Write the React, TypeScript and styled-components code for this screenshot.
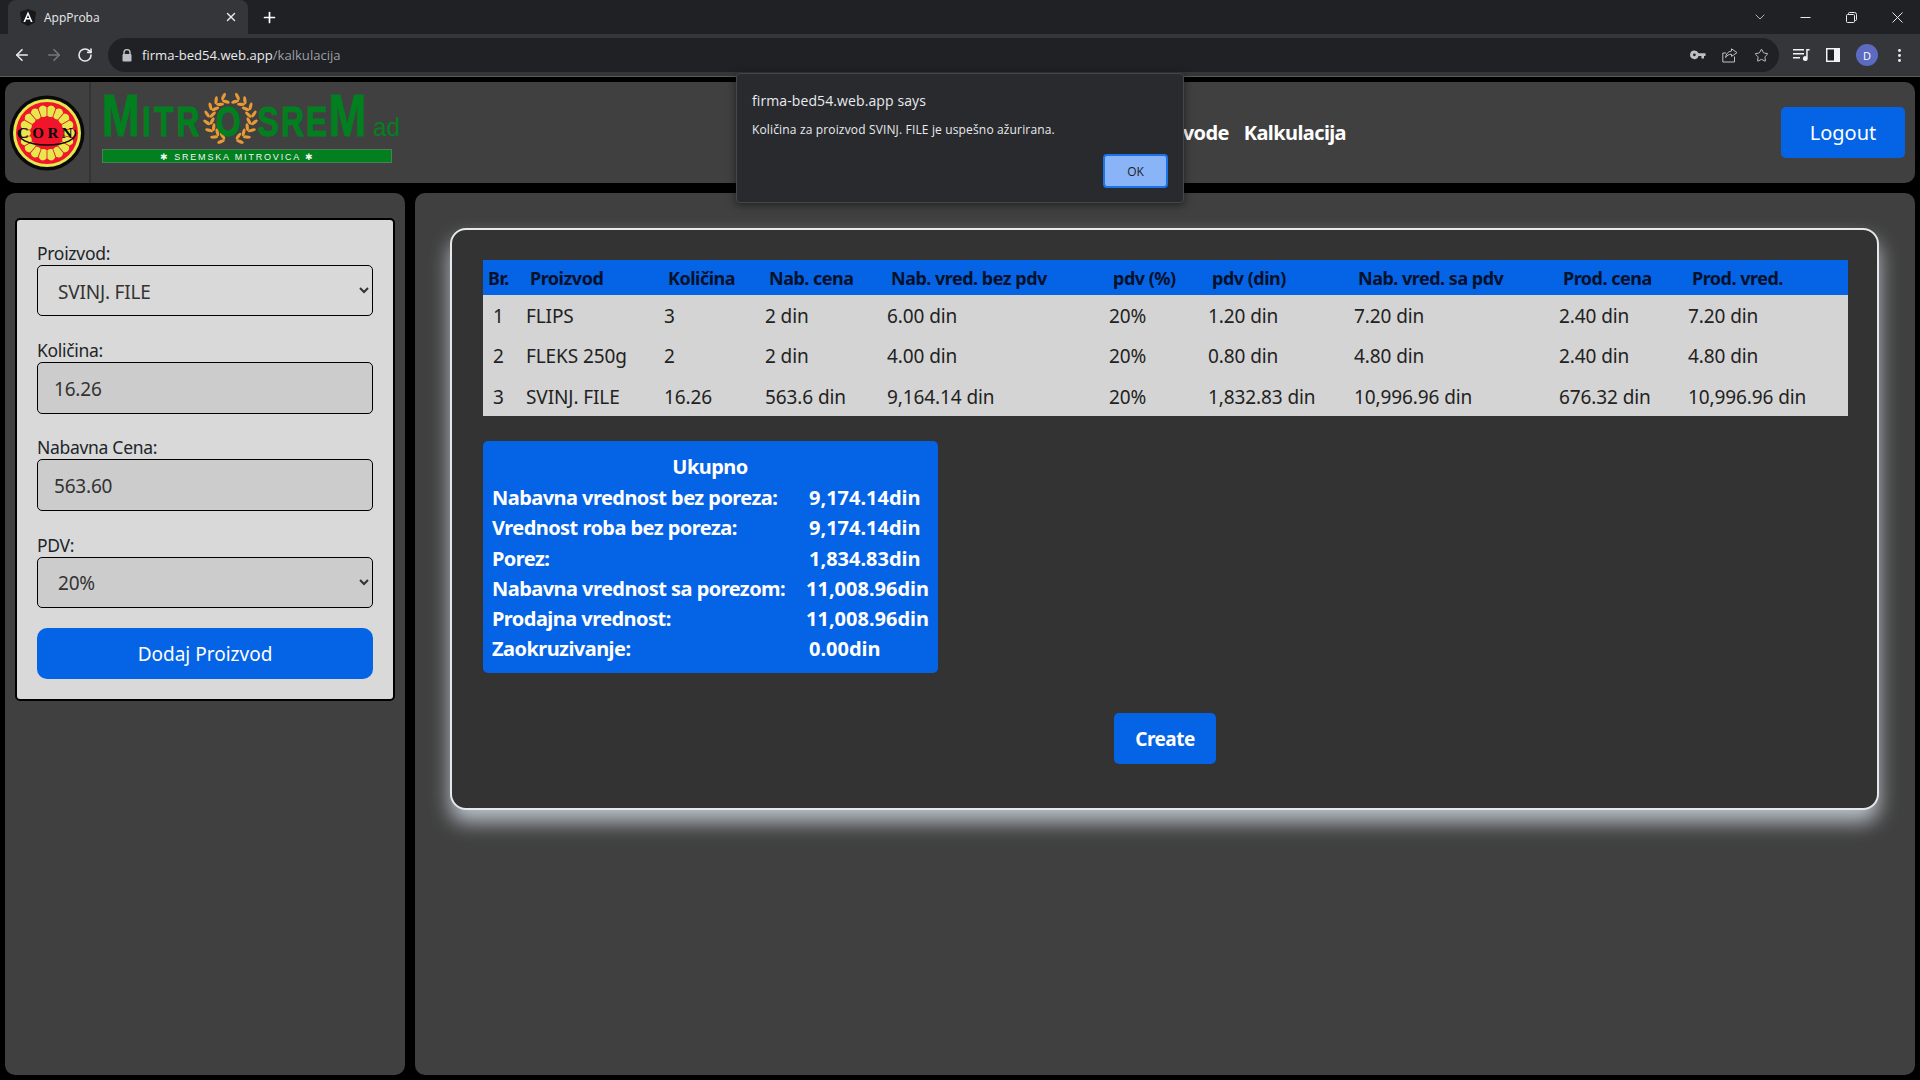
import React from 'react'
import styled, { createGlobalStyle } from 'styled-components'
import { ArrowLeft, ArrowRight, ChevronDown, MoreVertical, Plus, RotateCw, Star, X } from 'lucide-react'

const BLUE = '#0563e6'
const FONT = '"Noto Sans", "Open Sans", sans-serif'

const GlobalStyle = createGlobalStyle`
  html, body { margin: 0; padding: 0; background: #000; overflow: hidden; }
  body { font-family: ${FONT}; }
  * { box-sizing: border-box; }
`

const COLUMNS = [39, 138, 101, 122, 222, 99, 146, 205, 129, 164]
const HEADERS = ['Br.', 'Proizvod', 'Količina', 'Nab. cena', 'Nab. vred. bez pdv', 'pdv (%)', 'pdv (din)', 'Nab. vred. sa pdv', 'Prod. cena', 'Prod. vred.']
const ROWS = [
  ['1', 'FLIPS', '3', '2 din', '6.00 din', '20%', '1.20 din', '7.20 din', '2.40 din', '7.20 din'],
  ['2', 'FLEKS 250g', '2', '2 din', '4.00 din', '20%', '0.80 din', '4.80 din', '2.40 din', '4.80 din'],
  ['3', 'SVINJ. FILE', '16.26', '563.6 din', '9,164.14 din', '20%', '1,832.83 din', '10,996.96 din', '676.32 din', '10,996.96 din']
]
const TOTALS = [
  { label: 'Nabavna vrednost bez poreza:', value: '9,174.14din' },
  { label: 'Vrednost roba bez poreza:', value: '9,174.14din' },
  { label: 'Porez:', value: '1,834.83din' },
  { label: 'Nabavna vrednost sa porezom:', value: '11,008.96din', wide: true },
  { label: 'Prodajna vrednost:', value: '11,008.96din', wide: true },
  { label: 'Zaokruzivanje:', value: '0.00din' }
]

function AngularIcon () {
  return (
    <svg width="16" height="17" viewBox="0 0 16 17">
      <path d="M8 0 L16 2.8 L14.7 13.4 L8 17 L1.3 13.4 L0 2.8 Z" fill="#16181c" />
      <path d="M8 2.4 L12.6 13 H10.8 L9.9 10.6 H6.1 L5.2 13 H3.4 Z M8 6 L6.8 9 H9.2 Z" fill="#fff" fillRule="evenodd" />
    </svg>
  )
}

function LockIcon () {
  return (
    <svg width="10" height="13" viewBox="0 0 10 13">
      <path d="M2 5.5 V3.6 a3 3 0 0 1 6 0 V5.5" fill="none" stroke="#bdc1c6" strokeWidth="1.4" />
      <rect x="0.5" y="5" width="9" height="7.5" rx="1" fill="#bdc1c6" />
    </svg>
  )
}

function KeyIcon () {
  return (
    <svg width="16" height="10" viewBox="0 0 16 10">
      <path d="M4.5 0.5 a4.3 4.3 0 0 1 4 2.7 H15.5 V6 H14 V8.4 H11.4 V6 H8.5 a4.3 4.3 0 1 1 -4 -5.5 Z M4.4 3.4 a1.4 1.4 0 1 0 0 2.8 a1.4 1.4 0 0 0 0 -2.8 Z" fill="#bdc1c6" fillRule="evenodd" />
    </svg>
  )
}

function ShareIcon () {
  return (
    <svg width="16" height="15" viewBox="0 0 16 15" fill="none" stroke="#bdc1c6" strokeWidth="1">
      <path d="M12.5 8.5 V14 H0.8 V5 H4" />
      <path d="M9.5 0.8 L15 4.6 L9.5 8.4 V6.2 C6.8 6.2 5 7.4 3.6 9.6 C4 6 6 3.4 9.5 3 Z" />
    </svg>
  )
}

function MediaIcon () {
  return (
    <svg width="17" height="12" viewBox="0 0 17 12" fill="#f1f3f4">
      <rect x="0" y="0" width="11" height="1.5" />
      <rect x="0" y="4" width="11" height="1.5" />
      <rect x="0" y="8" width="7" height="1.5" />
      <path d="M13.2 0 H16.6 V1.6 H14.7 V9.6 A2.4 2.4 0 1 1 13.2 7.4 Z" />
    </svg>
  )
}

function SidePanelIcon () {
  return (
    <svg width="14" height="14" viewBox="0 0 14 14">
      <rect width="14" height="14" fill="#f1f3f4" />
      <rect x="1.5" y="1.5" width="6.5" height="11" fill="#202124" />
    </svg>
  )
}

function WindowIcon ({ kind }: { kind: 'min' | 'restore' | 'close' }) {
  return (
    <svg width="11" height="11" viewBox="0 0 11 11" fill="none" stroke="#e8eaed" strokeWidth="1">
      {kind === 'min' && <path d="M0.5 5.5 H10.5" />}
      {kind === 'restore' && <path d="M2.5 2.5 V1.5 a1 1 0 0 1 1 -1 H8.5 a2 2 0 0 1 2 2 V7.5 a1 1 0 0 1 -1 1 H8.5 M1.5 2.5 H7.5 a1 1 0 0 1 1 1 V9.5 a1 1 0 0 1 -1 1 H1.5 a1 1 0 0 1 -1 -1 V3.5 a1 1 0 0 1 1 -1 Z" />}
      {kind === 'close' && <path d="M0.5 0.5 L10.5 10.5 M10.5 0.5 L0.5 10.5" />}
    </svg>
  )
}

function CornLogo () {
  const petals = Array.from({ length: 18 }, (_, i) => i * 20 + 10)
  return (
    <svg width="76" height="76" viewBox="0 0 76 76">
      <circle cx="38" cy="38" r="37.5" fill="#0a0a0a" />
      <circle cx="38" cy="38" r="34" fill="#e6e84e" />
      <circle cx="38" cy="38" r="31" fill="#f0152a" />
      {petals.map(angle => (
        <path key={angle} d="M35.4 21 L34 12.5 Q38 8 42 12.5 L40.6 21 Q38 22.5 35.4 21 Z" fill="#e6e84e" transform={`rotate(${angle} 38 38)`} />
      ))}
      <text x="38" y="43" textAnchor="middle" fontFamily="Liberation Serif, serif" fontWeight="700" fontSize="15" letterSpacing="3.6" fill="#0a0a0a">CORN</text>
      <path d="M10 35 C6 44 20 50 38 50 C56 50 70 44 66 35" fill="none" stroke="#0a0a0a" strokeWidth="1.4" />
    </svg>
  )
}

function Laurel () {
  const steps = Array.from({ length: 8 }, (_, i) => 16 + i * 20)
  const pair = (a: number, side: number) => {
    const rad = a * Math.PI / 180
    const x = side * Math.sin(rad) * 21
    const y = Math.cos(rad) * 21
    return (
      <g key={`${side}-${a}`} transform={`translate(${x} ${y}) rotate(${side * (90 - a)})`}>
        <ellipse cx="2.8" cy="-3" rx="4" ry="1.6" fill="#e89a34" transform="rotate(-50 2.8 -3)" />
        <ellipse cx="-2.8" cy="-3" rx="4" ry="1.6" fill="#e89a34" transform="rotate(50 -2.8 -3)" />
      </g>
    )
  }
  return <g transform="translate(129.5 28.5)">{steps.map(a => pair(a, 1))}{steps.map(a => pair(a, -1))}</g>
}

function MitrosremLogo () {
  const green = '#028020'
  return (
    <svg width="300" height="100" viewBox="0 -11 300 100">
      <Laurel />
      <g transform="scale(0.76 1)">
        <text y="45" fontFamily="Liberation Sans, sans-serif" fontWeight="700" fontSize="42" fill={green} stroke={green} strokeWidth="1">
          <tspan x="1" fontSize="60">M</tspan>
          <tspan x="54" letterSpacing="4">ITR</tspan>
          <tspan x="151">O</tspan>
          <tspan x="206" letterSpacing="2.7">SRE</tspan>
          <tspan x="299" fontSize="60">M</tspan>
        </text>
      </g>
      <text x="272" y="45" fontSize="25" textLength="27" lengthAdjust="spacingAndGlyphs" fontFamily="Liberation Sans, sans-serif" fill={green}>ad</text>
      <rect x="1.5" y="58.5" width="289" height="13" fill={green} stroke="#4b7f56" />
      <text x="59" y="68.5" fontSize="9" textLength="153" fontFamily="Liberation Sans, sans-serif" fill="#eef6ee">✱ SREMSKA MITROVICA ✱</text>
    </svg>
  )
}

export default function App () {
  return (
    <Page>
      <GlobalStyle />
      <TabStrip>
        <ActiveTab>
          <AngularIcon />
          <TabTitle>AppProba</TabTitle>
          <X size={14} color="#e8eaed" strokeWidth={2.4} />
        </ActiveTab>
        <NewTab><Plus size={17} color="#fff" strokeWidth={2.4} /></NewTab>
        <WindowControls>
          <ChevronDown size={16} color="#bdc1c6" strokeWidth={1.4} />
          <WindowButton><WindowIcon kind="min" /></WindowButton>
          <WindowButton><WindowIcon kind="restore" /></WindowButton>
          <WindowButton><WindowIcon kind="close" /></WindowButton>
        </WindowControls>
      </TabStrip>
      <Toolbar>
        <NavIcons>
          <ArrowLeft size={18} color="#e8eaed" strokeWidth={2.2} />
          <ArrowRight size={18} color="#74777b" strokeWidth={2.2} />
          <RotateCw size={16} color="#e8eaed" strokeWidth={2.4} />
        </NavIcons>
        <Omnibox>
          <LockIcon />
          <UrlText>firma-bed54.web.app<UrlPath>/kalkulacija</UrlPath></UrlText>
          <OmniIcons>
            <KeyIcon />
            <ShareIcon />
            <Star size={15} color="#bdc1c6" strokeWidth={1.6} />
          </OmniIcons>
        </Omnibox>
        <ToolIcons>
          <MediaIcon />
          <SidePanelIcon />
          <Avatar>D</Avatar>
          <MoreVertical size={17} color="#e8eaed" strokeWidth={2.2} />
        </ToolIcons>
      </Toolbar>

      <Content>
        <Navbar>
          <LogoCell><CornLogo /></LogoCell>
          <BrandCell><MitrosremLogo /></BrandCell>
          <NavLinks>
            <NavLink>Proizvode</NavLink>
            <NavLink>Kalkulacija</NavLink>
          </NavLinks>
          <LogoutButton>Logout</LogoutButton>
        </Navbar>

        <Columns>
          <Sidebar>
            <FormCard>
              <Field>
                <FieldLabel>Proizvod:</FieldLabel>
                <FieldSelect defaultValue="SVINJ. FILE">
                  <option>FLIPS</option>
                  <option>FLEKS 250g</option>
                  <option>SVINJ. FILE</option>
                </FieldSelect>
              </Field>
              <Field>
                <FieldLabel>Količina:</FieldLabel>
                <FieldInput defaultValue="16.26" />
              </Field>
              <Field>
                <FieldLabel>Nabavna Cena:</FieldLabel>
                <FieldInput defaultValue="563.60" />
              </Field>
              <Field>
                <FieldLabel>PDV:</FieldLabel>
                <FieldSelect $filled defaultValue="20%">
                  <option>10%</option>
                  <option>20%</option>
                </FieldSelect>
              </Field>
              <AddButton>Dodaj Proizvod</AddButton>
            </FormCard>
          </Sidebar>

          <Main>
            <Panel>
              <ItemsTable>
                <colgroup>
                  {COLUMNS.map((width, i) => <col key={i} width={width} />)}
                </colgroup>
                <thead>
                  <tr>{HEADERS.map(h => <HeadCell key={h}>{h}</HeadCell>)}</tr>
                </thead>
                <tbody>
                  {ROWS.map(row => (
                    <tr key={row[0]}>{row.map((cell, i) => <BodyCell key={i}>{cell}</BodyCell>)}</tr>
                  ))}
                </tbody>
              </ItemsTable>

              <TotalsBox>
                <TotalsTitle>Ukupno</TotalsTitle>
                {TOTALS.map(t => (
                  <React.Fragment key={t.label}>
                    <span>{t.label}</span>
                    <TotalValue $wide={t.wide}>{t.value}</TotalValue>
                  </React.Fragment>
                ))}
              </TotalsBox>

              <CreateRow>
                <CreateButton>Create</CreateButton>
              </CreateRow>
            </Panel>
          </Main>
        </Columns>
      </Content>

      <AlertDialog>
        <AlertTitle>firma-bed54.web.app says</AlertTitle>
        <AlertMessage>Količina za proizvod SVINJ. FILE je uspešno ažurirana.</AlertMessage>
        <AlertActions>
          <AlertButton>OK</AlertButton>
        </AlertActions>
      </AlertDialog>
    </Page>
  )
}

const Page = styled.div`
  position: relative;
  width: 1920px;
  height: 1080px;
  overflow: hidden;
  background: #000;
`
const TabStrip = styled.div`
  display: flex;
  align-items: flex-end;
  height: 34px;
  background: #202124;
  padding-left: 8px;
`
const ActiveTab = styled.div`
  display: flex;
  align-items: center;
  width: 240px;
  height: 34px;
  padding: 0 10px 0 12px;
  background: #35363a;
  border-radius: 8px 8px 0 0;
`
const TabTitle = styled.span`
  flex: 1;
  margin-left: 8px;
  font-family: "Open Sans", sans-serif;
  font-size: 12px;
  color: #e8eaed;
`
const NewTab = styled.div`
  display: flex;
  align-items: center;
  justify-content: center;
  width: 34px;
  height: 34px;
  margin-left: 4px;
`
const WindowControls = styled.div`
  display: flex;
  align-items: center;
  height: 34px;
  margin-left: auto;
  & > svg { margin-right: 14px; }
`
const WindowButton = styled.div`
  display: flex;
  align-items: center;
  justify-content: center;
  width: 46px;
  height: 28px;
`
const Toolbar = styled.div`
  display: flex;
  align-items: center;
  height: 43px;
  background: #35363a;
  border-bottom: 1px solid #5a5b5e;
`
const NavIcons = styled.div`
  display: flex;
  align-items: center;
  gap: 14px;
  width: 108px;
  padding-left: 13px;
`
const Omnibox = styled.div`
  display: flex;
  align-items: center;
  width: 1671px;
  height: 34px;
  padding: 0 10px 0 14px;
  background: #202124;
  border-radius: 17px;
`
const UrlText = styled.span`
  margin-left: 10px;
  font-family: "Open Sans", sans-serif;
  font-size: 13.1px;
  color: #e8eaed;
`
const UrlPath = styled.span`
  color: #9aa0a6;
`
const OmniIcons = styled.div`
  display: flex;
  align-items: center;
  gap: 16px;
  margin-left: auto;
`
const ToolIcons = styled.div`
  display: flex;
  align-items: center;
  gap: 16px;
  padding-left: 14px;
  & > svg:last-child { margin-left: -3px; }
`
const Avatar = styled.div`
  display: flex;
  align-items: center;
  justify-content: center;
  width: 22px;
  height: 22px;
  border-radius: 50%;
  background: #5c6bc0;
  font-family: "Open Sans", sans-serif;
  font-size: 11px;
  color: #fff;
`
const Content = styled.div`
  display: flex;
  flex-direction: column;
  gap: 10px;
  padding: 5px;
`
const Navbar = styled.nav`
  display: flex;
  align-items: center;
  height: 101px;
  padding-right: 10px;
  background: #404040;
  border-radius: 10px;
`
const LogoCell = styled.div`
  display: flex;
  align-items: center;
  justify-content: center;
  width: 86px;
  height: 100%;
  border-right: 2px solid #343434;
  padding-right: 1px;
`
const BrandCell = styled.div`
  display: flex;
  align-self: flex-start;
  margin: -2px 0 0 10px;
`
const NavLinks = styled.div`
  display: flex;
  gap: 15px;
  margin: 0 435px 0 auto;
`
const NavLink = styled.a`
  font-size: 20px;
  font-weight: 700;
  letter-spacing: -0.6px;
  color: #fff;
`
const LogoutButton = styled.button`
  width: 124px;
  height: 51px;
  border: 0;
  border-radius: 5px;
  background: ${BLUE};
  font-family: ${FONT};
  font-size: 20px;
  color: #fff;
`
const Columns = styled.div`
  display: flex;
  gap: 10px;
  height: 882px;
`
const Sidebar = styled.aside`
  width: 400px;
  padding: 25px 10px 0;
  background: #404040;
  border-radius: 10px;
`
const FormCard = styled.form`
  display: flex;
  flex-direction: column;
  gap: 21.5px;
  padding: 21px 20px 20px;
  background: #d9d9d9;
  border: 2px solid #000;
  border-radius: 5px;
`
const Field = styled.div`
  display: flex;
  flex-direction: column;
`
const FieldLabel = styled.label`
  height: 24px;
  font-size: 17.5px;
  line-height: 24px;
  letter-spacing: -0.3px;
  color: #212529;
`
const FieldSelect = styled.select<{ $filled?: boolean }>`
  width: 100%;
  height: 51px;
  padding: 2px 0 0 16px;
  border: 1px solid #000;
  border-radius: 5px;
  background: ${p => (p.$filled ? '#cccccc' : '#d9d9d9')};
  font-family: ${FONT};
  font-size: 19px;
  letter-spacing: -0.2px;
  color: #333;
`
const FieldInput = styled.input`
  width: 100%;
  height: 52px;
  padding: 2px 0 0 16px;
  border: 1px solid #000;
  border-radius: 5px;
  background: #cccccc;
  font-family: ${FONT};
  font-size: 19px;
  letter-spacing: -0.2px;
  color: #333;
`
const AddButton = styled.button`
  height: 51px;
  margin-top: -1px;
  border: 0;
  border-radius: 10px;
  background: ${BLUE};
  font-family: ${FONT};
  font-size: 19px;
  color: #fff;
`
const Main = styled.main`
  flex: 1;
  padding: 35px 36px 0 35px;
  background: #404040;
  border-radius: 10px;
`
const Panel = styled.section`
  height: 582px;
  padding: 30px 29px 0 31px;
  background: #333;
  border: 2px solid #e6e8ea;
  border-radius: 16px;
  box-shadow: 0 12px 20px rgba(225, 235, 245, 0.75);
`
const ItemsTable = styled.table`
  width: 1365px;
  table-layout: fixed;
  border-collapse: collapse;
  background: #d4d4d4;
`
const HeadCell = styled.th`
  height: 35px;
  padding: 0 0 0 8px;
  background: ${BLUE};
  font-size: 18px;
  font-weight: 700;
  letter-spacing: -0.5px;
  text-align: left;
  white-space: nowrap;
  color: #06122b;
  &:first-child { padding-left: 5px; }
`
const BodyCell = styled.td`
  height: 40.3px;
  padding: 2px 0 0 4px;
  font-size: 19px;
  letter-spacing: -0.1px;
  white-space: nowrap;
  color: #222;
  &:first-child { padding-left: 10px; }
`
const TotalsBox = styled.div`
  display: grid;
  grid-template-columns: 317px 1fr;
  grid-auto-rows: 30.2px;
  align-items: center;
  width: 455px;
  height: 232px;
  margin-top: 25px;
  padding: 11.5px 0 0 9px;
  background: ${BLUE};
  border-radius: 5px;
  font-size: 20px;
  font-weight: 700;
  letter-spacing: -0.55px;
  color: #fff;
`
const TotalsTitle = styled.div`
  grid-column: 1 / -1;
  margin-top: -1.5px;
  padding-right: 10px;
  text-align: center;
`
const TotalValue = styled.span<{ $wide?: boolean }>`
  margin-left: ${p => (p.$wide ? '-3px' : '0')};
  letter-spacing: 0;
  white-space: nowrap;
`
const CreateRow = styled.div`
  display: flex;
  justify-content: center;
  margin-top: 40px;
`
const CreateButton = styled.button`
  width: 102px;
  height: 51px;
  margin-left: -1px;
  padding-top: 2px;
  border: 0;
  border-radius: 5px;
  background: ${BLUE};
  font-family: ${FONT};
  font-size: 19px;
  font-weight: 700;
  letter-spacing: -0.5px;
  color: #fff;
`
const AlertDialog = styled.div`
  position: absolute;
  top: 73px;
  left: 736px;
  width: 448px;
  height: 130px;
  padding: 18px 15px 0;
  background: #292a2d;
  border: 1px solid #45464a;
  border-radius: 4px;
  box-shadow: 0 2px 8px rgba(0, 0, 0, 0.5);
  font-family: "Open Sans", sans-serif;
  color: #e8eaed;
`
const AlertTitle = styled.div`
  font-size: 14px;
  line-height: 18px;
  letter-spacing: 0.1px;
`
const AlertMessage = styled.div`
  margin-top: 12px;
  font-size: 12px;
  line-height: 16px;
  letter-spacing: 0.15px;
`
const AlertActions = styled.div`
  display: flex;
  justify-content: flex-end;
  margin-top: 16px;
`
const AlertButton = styled.button`
  width: 65px;
  height: 34px;
  border: 1px solid #202124;
  border-radius: 4px;
  outline: 2px solid #1a73e8;
  outline-offset: -2px;
  background: #8ab4f8;
  font-family: "Open Sans", sans-serif;
  font-size: 12px;
  color: #202124;
`
